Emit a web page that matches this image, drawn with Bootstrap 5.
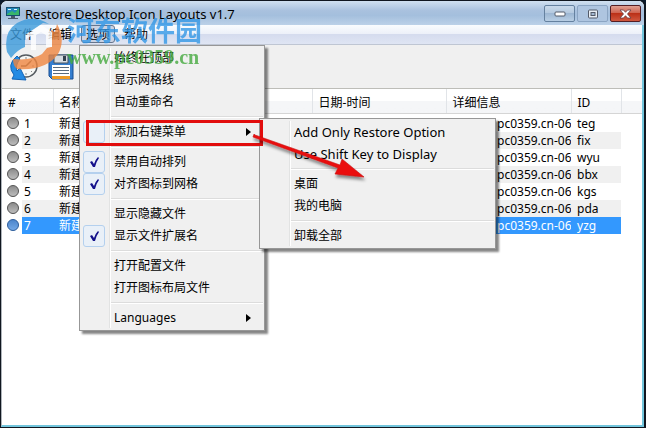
<!DOCTYPE html>
<html lang="zh-CN">
<head>
<meta charset="utf-8">
<meta name="viewport" content="width=device-width, initial-scale=1">
<title>Restore Desktop Icon Layouts v1.7</title>
<link href="https://cdn.jsdelivr.net/npm/bootstrap@5.3.0/dist/css/bootstrap.min.css" rel="stylesheet">
<style>
body{font:12px/17px "Noto Sans","Noto Sans CJK SC",sans-serif;color:#000;background:#0b1a2c}
button{color:inherit;font:inherit}
.win{border:1px solid #10161f;border-width:1px 2px 1px 1px;border-radius:7px 7px 0 0;overflow:hidden;background:#fff;min-height:100vh}
.titlebar{height:24px;padding-right:3px;background:linear-gradient(#d0e0f0,#a9c1de 40%,#a4bfdd 60%,#bcd1e8)}
.titlebar h1{font-size:13px;line-height:18px}
.capbtn{width:31px;height:17px;border:1px solid #65819f;border-radius:2px;background:linear-gradient(#c9d9ea,#b4c9df 45%,#9db7d3 50%,#b8cee4)}
.capbtn.dim{border-color:#8ba5c3;background:#aec5e0}
.capbtn.shut{border-color:#541f24;background:linear-gradient(#e0a093,#cf6450 45%,#bb3017 50%,#d0583f)}
.capgroup{gap:2px}
.frame{border:solid #72c5dc;border-width:0 2px 2px 1px;border-left-color:#aeb4ba}
.menubar{height:20px;padding-left:3px;background:linear-gradient(#fafcfe,#edf1f9 45%,#d5dcee 50%,#dfe5f3);border-bottom:1px solid #bfc6d3}
.menubar .top-item{height:18px;line-height:16px;border:1px solid transparent;border-radius:3px;background:none}
.menubar .top-item.open{border-color:#66758c;background:#cbd3e3}
.tools{height:44px;gap:10px;background:#f0f0f0;border-bottom:1px solid #bdbdb8}
.listing{table-layout:fixed;line-height:17px}
.listing th{height:24px;padding:3px 6px 0;font-weight:400;vertical-align:middle;background:linear-gradient(#fff 50%,#f5f6f8 52%,#f4f5f7);border-right:1px solid #e1e4e8;border-bottom:1px solid #d5d5d5}
.listing td{height:17px;padding:0 6px;white-space:nowrap;overflow:hidden}
.listing tbody::before{content:"";display:block;height:1px}
.listing .c-dot{width:20px}.listing .c-num{width:31px}.listing .c-name{width:259px}.listing .c-date{width:134px}.listing .c-info{width:125px}.listing .c-id{width:50px}
.listing .alt td.cell{background:#f0f0f0}
.listing .sel td.cell{background:#3398fe;color:#fff}
.listing td.c-ball{padding:0 0 0 5px}
.listing td.num{padding-left:2px}
.listing td.info{padding-left:51px;padding-right:0}
.ball{width:12px;height:12px;border-radius:50%;border:1px solid #555;background:linear-gradient(#8c8c8c,#bcbcbc)}
.sel .ball{border-color:#2d5d9b;background:linear-gradient(#4d86cc,#74a9e6)}
.pop{position:absolute;display:block;margin:0;padding:1px;border:1px solid #979797;border-radius:0;background:#f0f0f0;box-shadow:3px 3px 2px #0000007a;font-size:12px;color:#000;z-index:5}
.pop-main{top:20px;left:-2px;width:186px}
.pop .pop-sub{top:-3px;left:178px;width:237px;padding-top:2px}
.pop::before{content:"";position:absolute;top:2px;bottom:2px;left:29px;width:2px;background:#e2e3e3;border-right:1px solid #fff}
.pop .dropdown-item{height:22px;padding:0 0 0 33px;line-height:22px;color:#000;font-size:12px}
.pop .dropdown-item.latin{font-size:13px}
.pop hr{margin:3px 0 3px 30px;height:2px;border:0;border-top:1px solid #dcdcdc;border-bottom:1px solid #fff;opacity:1;background:none}
.tickbox{position:absolute;left:2px;top:0;width:22px;height:22px;border:1px solid #b4d0ee;border-radius:3px;background:#e9f0f8}
.tickbox svg{display:block}
.arr{position:absolute;right:12px;top:7px}
.callout-box{position:absolute;inset:-1px 0 -3px 5px;border:3px solid #e20d0d;z-index:7}
.pointer{position:absolute;left:171px;top:10px;z-index:8;pointer-events:none}
.brand{position:absolute;left:4px;top:15px;z-index:9;pointer-events:none}
.brand-cn{font:700 27px/28px "Noto Sans CJK SC",sans-serif;color:#2f96e6;opacity:.78}
.brand-url{font:700 20px/26px "Liberation Serif",serif;color:#45aa3f;opacity:.8}
.brand-text{margin-left:4px}
</style>
<script src="https://cdn.jsdelivr.net/npm/bootstrap@5.3.0/dist/js/bootstrap.bundle.min.js"></script>
</head>
<body>
<main class="win position-relative d-flex flex-column">
  <header class="titlebar d-flex align-items-start">
    <svg class="ms-1 mt-1 flex-shrink-0" width="16" height="15" viewBox="0 0 16 15" aria-hidden="true"><path d="M1 2h14v9H1z" fill="#174d70"/><path d="M2 3h12v7H2z" fill="#2388bb"/><path d="M2 9l5-3 3 2 4-5v7H2z" fill="#38b56b"/><path d="M3 4h3v1H3zM9 4h3v1H9z" fill="#d8f4ff"/><path d="M6 11h4v2h3v1H3v-1h3z" fill="#48586b"/></svg>
    <h1 class="m-0 ms-1 mt-1 fw-normal flex-grow-1">Restore Desktop Icon Layouts v1.7</h1>
    <div class="capgroup d-flex mt-1">
      <button class="capbtn p-0 d-flex align-items-center justify-content-center" aria-label="最小化"><svg width="12" height="6"><rect x="1" y="1" width="10" height="4" rx="1" fill="#fff" stroke="#535a68"/></svg></button>
      <button class="capbtn dim p-0 d-flex align-items-center justify-content-center" aria-label="最大化"><svg width="12" height="10"><rect x="1.500" y="1" width="9" height="8" rx="1" fill="#e8eef5" stroke="#535a68"/><rect x="4" y="3.500" width="4" height="3" fill="#a4b9d3" stroke="#535a68"/></svg></button>
      <button class="capbtn shut p-0 d-flex align-items-center justify-content-center" aria-label="关闭"><svg width="13" height="10" viewBox="0 0 13 10"><path d="M1 1h3.500l2 2.300L8.500 1H12L8.500 5 12 9H8.500l-2-2.300L4.500 9H1l3.500-4z" fill="#fff" stroke="#623b42" stroke-width=".8"/></svg></button>
    </div>
  </header>

  <div class="frame flex-grow-1 d-flex flex-column">
    <nav class="menubar d-flex gap-1">
      <button class="top-item px-1">文件</button>
      <button class="top-item px-1">编辑</button>
      <div class="position-relative">
        <button class="top-item open px-1" aria-expanded="true">选项</button>
        <div class="dropdown-menu show pop pop-main">
          <button class="dropdown-item">始终在顶部</button>
          <button class="dropdown-item">显示网格线</button>
          <button class="dropdown-item">自动重命名</button>
          <hr>
          <div class="position-relative">
            <button class="dropdown-item" aria-expanded="true"><span class="tickbox"></span>添加右键菜单<svg class="arr" width="5" height="8"><path d="M0 0l5 4-5 4z"/></svg></button>
            <span class="callout-box"></span>
            <div class="dropdown-menu show pop pop-sub">
              <button class="dropdown-item latin">Add Only Restore Option</button>
              <button class="dropdown-item latin">Use Shift Key to Display</button>
              <hr>
              <button class="dropdown-item">桌面</button>
              <button class="dropdown-item">我的电脑</button>
              <hr>
              <button class="dropdown-item">卸载全部</button>
            </div>
            <svg class="pointer" width="116" height="56" viewBox="0 0 116 56" aria-hidden="true"><defs><filter id="soft" x="-10%" y="-10%" width="130%" height="140%"><feDropShadow dx="1" dy="3" stdDeviation="1.500" flood-opacity=".45"/></filter></defs><path d="M2 3L1 6L86 37L83 43L112 46L90 28L88 34L3 4z" fill="#ea1010" stroke="#c80f0f" stroke-width=".6" filter="url(#soft)"/></svg>
          </div>
          <hr>
          <button class="dropdown-item position-relative"><span class="tickbox"><svg width="20" height="20" viewBox="0 0 20 20"><path d="M6 10l2-1 2 3q1-4 4-7l1 1q-3 4-4 9H9z" fill="#15128b"/></svg></span>禁用自动排列</button>
          <button class="dropdown-item position-relative"><span class="tickbox"><svg width="20" height="20" viewBox="0 0 20 20"><path d="M6 10l2-1 2 3q1-4 4-7l1 1q-3 4-4 9H9z" fill="#15128b"/></svg></span>对齐图标到网格</button>
          <hr>
          <button class="dropdown-item">显示隐藏文件</button>
          <button class="dropdown-item position-relative"><span class="tickbox"><svg width="20" height="20" viewBox="0 0 20 20"><path d="M6 10l2-1 2 3q1-4 4-7l1 1q-3 4-4 9H9z" fill="#15128b"/></svg></span>显示文件扩展名</button>
          <hr>
          <button class="dropdown-item">打开配置文件</button>
          <button class="dropdown-item">打开图标布局文件</button>
          <hr>
          <button class="dropdown-item position-relative">Languages<svg class="arr" width="5" height="8"><path d="M0 0l5 4-5 4z"/></svg></button>
        </div>
      </div>
      <button class="top-item px-1">帮助</button>
    </nav>

    <div class="tools d-flex align-items-center px-2">
      <button class="border-0 bg-transparent p-0 d-flex" aria-label="还原布局"><svg width="28" height="28" viewBox="0 0 28 28"><circle cx="16" cy="13" r="11" fill="#f6f7f5" stroke="#555b60" stroke-width="1.500"/><path d="M16 13l5-5M16 13h-5" fill="none" stroke="#555" stroke-width="1.500"/><path d="M16 4v2M24 13h-2M16 22v-2M22 7l-1 1M22 19l-1-1" stroke="#888"/><path d="M7 3Q-4 12 4 22l-2 4 14 1-6-12-3 3Q5 12 10 6z" fill="#258be4" stroke="#1464b5"/></svg></button>
      <button class="border-0 bg-transparent p-0 d-flex" aria-label="保存布局"><svg width="26" height="26" viewBox="0 0 26 26"><path d="M1 1h24v24H4l-3-3z" fill="#347ed0" stroke="#164d91"/><path d="M6 1h14v8H6z" fill="#d7dce1" stroke="#47525f"/><path d="M15 2h3v5h-3z" fill="#34414e"/><path d="M4 11h18v13H4z" fill="#fff"/><path d="M5 13.500h16M5 16.500h16M5 19.500h16" stroke="#596a7c"/><path d="M4 22h18v3H4z" fill="#ee9a25"/></svg></button>
    </div>

    <table class="listing w-100">
      <colgroup><col class="c-dot"><col class="c-num"><col class="c-name"><col class="c-date"><col class="c-info"><col class="c-id"><col></colgroup>
      <thead><tr><th colspan="2">#</th><th>名称</th><th>日期-时间</th><th>详细信息</th><th>ID</th><th class="border-end-0"></th></tr></thead>
      <tbody>
        <tr><td class="c-ball"><div class="ball"></div></td><td class="cell num">1</td><td class="cell">新建布局</td><td class="cell"></td><td class="cell info">pc0359.cn-06</td><td class="cell">teg</td><td></td></tr>
        <tr class="alt"><td class="c-ball"><div class="ball"></div></td><td class="cell num">2</td><td class="cell">新建布局</td><td class="cell"></td><td class="cell info">pc0359.cn-06</td><td class="cell">fix</td><td></td></tr>
        <tr><td class="c-ball"><div class="ball"></div></td><td class="cell num">3</td><td class="cell">新建布局</td><td class="cell"></td><td class="cell info">pc0359.cn-06</td><td class="cell">wyu</td><td></td></tr>
        <tr class="alt"><td class="c-ball"><div class="ball"></div></td><td class="cell num">4</td><td class="cell">新建布局</td><td class="cell"></td><td class="cell info">pc0359.cn-06</td><td class="cell">bbx</td><td></td></tr>
        <tr><td class="c-ball"><div class="ball"></div></td><td class="cell num">5</td><td class="cell">新建布局</td><td class="cell"></td><td class="cell info">pc0359.cn-06</td><td class="cell">kgs</td><td></td></tr>
        <tr class="alt"><td class="c-ball"><div class="ball"></div></td><td class="cell num">6</td><td class="cell">新建布局</td><td class="cell"></td><td class="cell info">pc0359.cn-06</td><td class="cell">pda</td><td></td></tr>
        <tr class="sel"><td class="c-ball"><div class="ball"></div></td><td class="cell num">7</td><td class="cell">新建布局</td><td class="cell"></td><td class="cell info">pc0359.cn-06</td><td class="cell">yzg</td><td></td></tr>
      </tbody>
    </table>
  </div>

  <div class="brand d-flex">
    <svg width="58" height="55" viewBox="0 0 58 55" opacity=".8" aria-hidden="true"><path d="M2 36Q-2 16 12 7Q28-2 44 8L38 7L20 19V31Q12 34 6 42Z" fill="#3c9bdb"/><path d="M52 8Q61 24 53 38Q41 55 12 53Q8 50 8 43Q26 45 37 38L42 32L46 31V14L50 16Z" fill="#ef8640"/><path d="M21 19L36 9L47 16V31H41V19L36 16L31 19V34H26V20L21 23Z" fill="#fff"/></svg>
    <div class="brand-text"><div class="brand-cn">河东软件园</div><div class="brand-url">www.pc0359.cn</div></div>
  </div>
</main>
</body>
</html>
